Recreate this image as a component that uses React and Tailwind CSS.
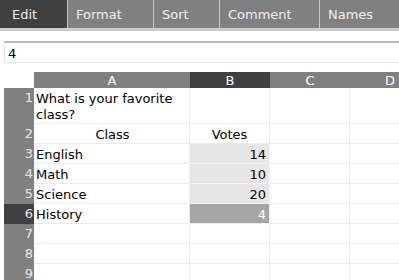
import React from "react";

const font = { fontFamily: '"DejaVu Sans", Verdana, sans-serif' };

const tabs = [
  { label: "Edit", w: "w-[67px]", active: true },
  { label: "Format", w: "w-[86px]" },
  { label: "Sort", w: "w-[66px]" },
  { label: "Comment", w: "w-[100px]" },
  { label: "Names", w: "w-[80px]" },
];

const cols = [
  { label: "A", active: false },
  { label: "B", active: true },
  { label: "C", active: false },
  { label: "D", active: false },
];

const rows = [
  { n: 1, h: "h-[36px]", a: "What is your favorite class?", b: "", aAlign: "left", bType: "none" },
  { n: 2, h: "h-[20px]", a: "Class", b: "Votes", aAlign: "center", bType: "header" },
  { n: 3, h: "h-[20px]", a: "English", b: "14", bType: "range" },
  { n: 4, h: "h-[20px]", a: "Math", b: "10", bType: "range" },
  { n: 5, h: "h-[20px]", a: "Science", b: "20", bType: "range" },
  { n: 6, h: "h-[20px]", a: "History", b: "4", bType: "active", activeRow: true },
  { n: 7, h: "h-[20px]", a: "", b: "" },
  { n: 8, h: "h-[20px]", a: "", b: "" },
  { n: 9, h: "h-[20px]", a: "", b: "" },
];

export default function App() {
  return (
    <div className="w-[399px] h-[280px] overflow-hidden bg-white text-[13px] text-black" style={font}>
      <div className="flex h-[28px] bg-[#808080]">
        {tabs.map((t, i) => (
          <div
            key={t.label}
            className={`${t.w} shrink-0 flex items-center pt-[1px] text-[#f0f0f0] ${
              t.active ? "bg-[#404040] pl-[12px]" : "pl-[8px]"
            } ${i > 0 ? "border-l border-[#c8c8c8]" : ""}`}
          >
            {t.label}
          </div>
        ))}
      </div>
      <div className="h-[3px] bg-[#cccccc]" />
      <div className="pt-[10px] pl-[4px]">
        <div className="h-[22px] w-[420px] border-t-2 border-t-[#b8b8b8] border-l border-l-[#e4e8ee] border-b border-b-[#e4e8ee] flex items-center pl-[3px] pt-[1px] leading-none">
          4
        </div>
      </div>
      <div className="pt-[9px] pl-[4px]">
        <div className="grid grid-cols-[30px_156px_80px_80px_80px] w-[426px]">
          <div className="h-[16px] bg-white" />
          {cols.map((c) => (
            <div
              key={c.label}
              className={`h-[16px] flex items-center justify-center leading-none text-white ${
                c.active ? "bg-[#404040]" : "bg-[#808080]"
              }`}
            >
              {c.label}
            </div>
          ))}
          {rows.map((r) => (
            <React.Fragment key={r.n}>
              <div
                className={`${r.h} ${r.activeRow ? "bg-[#404040]" : "bg-[#808080]"} text-[#e8e8e8] text-right pr-[1px] leading-[16px] pt-[2px]`}
              >
                {r.n}
              </div>
              <div
                className={`${r.h} border-r border-b border-[#ebebeb] pl-[2px] leading-[16px] pt-[3px] ${
                  r.aAlign === "center" ? "text-center" : "text-left"
                }`}
              >
                {r.a}
              </div>
              <div
                className={`${r.h} border-r border-b leading-[16px] pt-[3px] ${
                  r.bType === "range"
                    ? "bg-[#e6e6e6] border-[#f4f4f4] text-right pr-[3px]"
                    : r.bType === "active"
                    ? "bg-[#a6a6a6] border-[#ebebeb] text-right pr-[3px] text-white"
                    : r.bType === "header"
                    ? "border-[#ebebeb] text-center"
                    : "border-[#ebebeb]"
                }`}
              >
                {r.b}
              </div>
              <div className={`${r.h} border-r border-b border-[#ebebeb]`} />
              <div className={`${r.h} border-r border-b border-[#ebebeb]`} />
            </React.Fragment>
          ))}
        </div>
      </div>
    </div>
  );
}
